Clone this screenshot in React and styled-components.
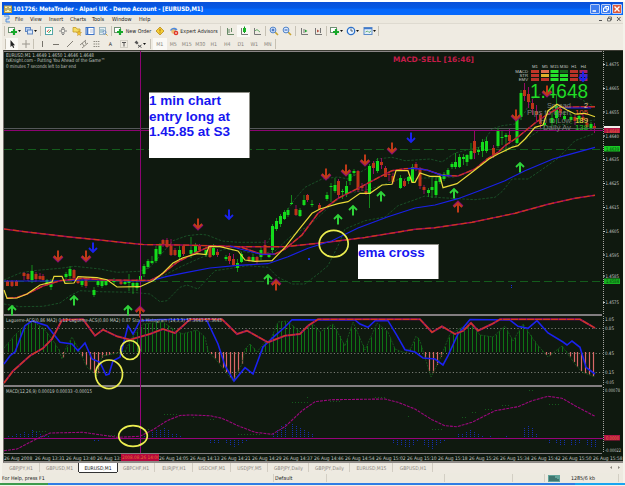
import styled, { createGlobalStyle } from "styled-components";

const GlobalStyle = createGlobalStyle`
  * { box-sizing: border-box; }
  body {
    margin: 0;
    background: #fff;
    overflow: hidden;
    font-family: "DejaVu Sans Condensed", "DejaVu Sans", sans-serif;
  }
`;

const Window = styled.div`
  width: 625px;
  height: 486px;
  padding: 2px 2px 0 2px;
  display: flex;
  flex-direction: column;
  background: #f4f2ea;
  box-shadow: inset 0 2px #fff;
`;

const TitleBar = styled.header`
  height: 13px;
  flex: none;
  display: flex;
  align-items: center;
  padding: 0 1px 0 2px;
  background: linear-gradient(#0a50d8 0%, #0458e6 45%, #0668fc 60%, #0668fc 100%);
  color: #fff;
`;

const TitleText = styled.span`
  flex: 1;
  margin-left: 1px;
  font: bold 6.1px "DejaVu Sans Condensed", "DejaVu Sans", sans-serif;
  letter-spacing: -0.1px;
  white-space: nowrap;
`;

const WindowButton = styled.span`
  width: 10px;
  height: 10px;
  margin-left: 1px;
  border: 1px solid #b9cdf6;
  border-radius: 1px;
  background: ${({ $close }) => ($close ? "#dc5a3c" : "#3f7df0")};
  display: flex;
`;

const MenuBar = styled.nav`
  height: 9px;
  flex: none;
  display: flex;
  align-items: center;
  background: #ece8de;
  border-bottom: 1px solid #dedad0;
  font-size: 5.5px;
  color: #222;
`;

const MenuItem = styled.span`
  width: ${({ $width }) => $width}px;
  white-space: nowrap;
`;

const ChildButtons = styled.span`
  margin-left: auto;
  display: flex;
  gap: 4px;
  padding-right: 2px;
  color: #555;
`;

const ToolBar = styled.div`
  height: ${({ $height }) => $height}px;
  flex: none;
  display: flex;
  align-items: center;
  padding-left: ${({ $indent }) => $indent}px;
  background: #efebe2;
  font-size: 5.3px;
  color: #222;
`;

const Tool = styled.span`
  width: ${({ $width }) => $width || 14}px;
  height: 12px;
  flex: none;
  display: flex;
  align-items: center;
  justify-content: center;
  color: ${({ $muted }) => ($muted ? "#858178" : "#222")};
  background: ${({ $pressed }) => ($pressed ? "#faf9f5" : "transparent")};
  white-space: nowrap;

  svg { flex: none; }
`;

const Separator = styled.i`
  width: 1px;
  height: 10px;
  margin: 0 ${({ $gap }) => $gap ?? 2}px;
  flex: none;
  background: #c6c1b4;
`;

const ChartFrame = styled.main`
  position: relative;
  width: 620px;
  height: 413px;
  flex: none;
  margin-left: 1px;
  display: flex;
  flex-direction: column;
  background: #0f190f;
  border-top: 1px solid #3c3c34;
  border-bottom: 2px solid #8f8b88;
  border-left: 1px solid #77706c;
`;

const Pane = styled.svg`
  display: block;
  flex: none;
  width: 618px;
  height: ${({ $height }) => $height}px;
  overflow: visible;
  position: relative;
  z-index: ${({ $raised }) => ($raised ? 1 : 0)};
`;

const Divider = styled.div`
  width: 598px;
  height: ${({ $height }) => $height || 2}px;
  flex: none;
  background: #827e80;
`;

const TimeAxis = styled.div`
  flex: 1;
  display: flex;
  align-items: center;
  font-size: 4.9px;
  color: #c9cdc9;
  white-space: nowrap;
`;

const TimeLabel = styled.span`
  width: ${({ $width }) => $width || 31}px;
  flex: none;
`;

const CursorTime = styled.span`
  width: 38px;
  height: 7px;
  flex: none;
  padding-left: 1px;
  overflow: hidden;
  background: #b4083c;
  color: #ea6c30;
  font-size: 4.7px;
  line-height: 7px;
`;

const Note = styled.div`
  position: absolute;
  z-index: 2;
  left: ${({ $x }) => $x}px;
  top: ${({ $y }) => $y}px;
  width: ${({ $width }) => $width}px;
  height: ${({ $height }) => $height}px;
  background: #fff;
  border: 1px solid #8d8d86;
  border-width: 1px 1px 0 0;
  color: #1616f0;
  font: bold 13.5px/15.5px "Liberation Sans", Arial, sans-serif;
  white-space: pre-line;
`;

const Tabs = styled.div`
  height: 10px;
  flex: none;
  display: flex;
  background: #eeeae1;
  font-size: 5px;
  color: #8b877e;
`;

const Tab = styled.span`
  width: ${({ $width }) => $width}px;
  flex: none;
  display: flex;
  justify-content: center;
  align-items: center;
  white-space: nowrap;
  height: 9px;
  color: ${({ $active }) => ($active ? "#111" : "inherit")};
  background: ${({ $active }) => ($active ? "#fff" : "transparent")};
  box-shadow: ${({ $active }) =>
    $active ? "-1px 0 #333, 1px 0 #333, 0 1px #333" : "inset -1px 0 #d2cdc2"};
`;

const TabArrows = styled.svg`
  width: 14px;
  height: 9px;
  margin-left: auto;
`;

const StatusBar = styled.footer`
  height: 10px;
  flex: none;
  display: flex;
  align-items: center;
  background: #edeae0;
  font-size: 5.3px;
  color: #222;
`;

const StatusCell = styled.span`
  width: ${({ $width }) => $width}px;
  height: 8px;
  flex: none;
  display: flex;
  align-items: center;
  gap: 11px;
  white-space: nowrap;
  padding-left: ${({ $pad }) => $pad || 0}px;
  border-right: 1px solid #d3cfc4;
`;

const TaskBar = styled.div`
  height: 2px;
  flex: none;
  margin: 0 -2px;
  background: linear-gradient(90deg, #3d9a4c 0 48px, #2f7de4 48px 575px, #19a5f0 575px);
`;

// Candles: x, high, low, body top, body bottom, 1 = up / 0 = down
const candles = [
  [7.5,281,287,282,287,0],[12,281,288,282,287,0],[16.5,281,287,282,287,0],
  [24,273,281,274,277,0],[28,274,282,275,280,0],[32,266,284,272,281,1],[36,273,283,275,280,0],
  [40,274,281,277,280,0],[43,275,282,277,281,0],[47,280,287,281,286,1],[51,280,291,282,288,1],
  [66,273,280,275,278,1],[70,267,280,270,277,1],[74,270,281,271,279,0],[78,279,285,281,284,0],
  [82,280,288,282,286,1],[86,278,289,279,287,0],[94,288,298,291,296,1],[98,280,288,282,286,1],
  [102,281,289,282,287,1],[106,281,287,282,286,1],[114,279,286,281,283,1],[121,281,286,282,285,0],
  [125,281,286,283,285,1],[129,275,292,282,284,1],[133,282,295,284,287,1],[137,280,292,284,289,1],
  [140.5,274,283,277,281,1],[144,265,278,267,275,1],[148,260,270,262,268,1],[152,257,265,262,264,1],
  [156,247,264,250,262,1],[160,244,256,246,255,1],[163,240,248,241,246,0],[167,239,249,241,248,0],
  [171,240,257,246,256,0],[175,249,257,251,256,0],[179.5,247,261,251,258,1],[183.5,246,257,247,255,0],
  [191,238,259,251,255,1],[195.5,244,256,246,254,1],[199.5,245,253,247,251,0],[206,248,258,251,256,1],
  [210,247,259,247,258,0],[213.5,245,257,249,256,1],[217.5,250,258,253,256,0],[226,256,262,258,260,1],
  [229.5,254,265,257,262,0],[233.5,255,267,260,266,0],[237.5,260,273,264,269,1],[241.5,253,264,255,263,1],
  [249,257,263,258,261,0],[253,255,263,258,262,1],[257,257,265,258,262,0],[261,248,261,251,258,1],
  [265,241,256,246,255,0],[269,255,259,256,258,1],[272.5,225,254,227,251,1],[276.5,219,232,222,230,1],
  [280.5,215,228,217,225,1],[284.5,211,221,213,220,1],[288,209,218,211,216,1],[291.5,196,206,204,205,1],
  [296,206,217,210,216,0],[300,209,218,211,217,1],[304,196,207,201,206,1],[307.5,195,203,196,201,0],
  [312,201,208,205,206,1],[319.5,204,211,206,210,0],[327,193,202,196,200,1],[331,184,203,187,188,1],
  [335,179,194,186,192,1],[338.5,180,200,182,196,0],[342.5,190,200,192,193,1],[346.5,182,198,187,195,1],
  [350,172,186,175,182,1],[354,170,177,172,174,1],[358,171,193,172,191,0],[362,184,192,187,189,0],
  [366,186,196,192,195,0],[369.5,165,209,167,195,1],[373.5,162,175,164,169,0],[377.5,159,174,162,172,1],
  [381.5,159,170,163,166,0],[385.5,167,178,169,178,0],[389,173,182,175,176,0],[393,174,185,177,183,0],
  [400.5,176,190,179,189,1],[404.5,180,188,182,187,0],[408.5,177,185,178,182,1],[412.5,165,184,168,183,1],
  [416,163,172,165,169,0],[420,168,190,170,187,0],[424,186,195,188,191,0],[428.5,189,198,191,194,1],
  [432,177,199,188,191,1],[436,178,198,182,196,1],[440,174,185,178,183,1],[444,173,182,175,180,1],
  [448,169,178,171,176,1],[452,163,170,165,168,1],[455.5,154,170,163,168,1],[459.5,155,169,158,168,1],
  [463.5,155,166,158,160,1],[467,155,167,156,163,1],[471,144,161,152,160,1],[474.5,132,160,142,154,0],
  [478.5,148,156,151,153,1],[482.5,140,158,143,152,1],[486.5,138,154,142,152,1],[493.5,146,159,149,156,0],
  [498,129,149,132,147,1],[502,131,146,138,139,1],[506,134,153,136,138,1],[509.5,130,145,136,142,0],
  [517,118,145,120,144,1],[521,91,121,94,118,1],[524.5,84,102,91,97,0],[528.5,88,109,95,103,0],
  [532.5,100,116,104,110,0],[536.5,106,122,112,116,0],[540.5,114,129,116,125,0],[544.5,121,128,124,126,1],
  [552,113,127,119,124,1],[556.5,95,125,107,119,1],[560.5,106,118,110,114,0],[564.5,112,122,117,120,1],
  [571,115,123,118,121,1],[575,116,126,118,122,0],[579,115,124,117,120,1],[583,115,123,118,121,0],
  [587,119,129,124,128,0],[591,123,131,125,129,1],[594.5,124,134,127,129,0],
];

const slowMa = "4,230 27,233 70,238 100,241 127,244 143,245.5 180,246 210,246.7 238,247.7 285,247.7 325,243.5 365,238.5 415,230.3 435,228.7 472,223.3 515,214.3 548,205.3 575,199.3 595,196.3";
const blueMa = "4,282 53,282 93,280.7 127,282 150,282 167,277.3 187,273.3 210,269 238,266.3 268,264.7 288,257.7 308,249.3 332,241.7 358,229 388,217.7 415,209 435,206 458,199.7 482,190.7 505,181.7 525,171.7 553,160 565,156.7 595,148.3";
const yellowMa = "4,291 7,299.3 17,299 27,295 40,286 52,283 54,277.3 62,277.3 65,284.3 74,284 78,277.7 97,278.7 107,280.7 117,288 140,287.7 153,281.7 163,274 173,264 183,258.7 197,254.7 206,255.7 209,247.3 220,247.7 238,252 245,261 255,262.3 272,261.7 285,248.3 298,231.7 312,214.3 320,210 338,204.7 348,202.7 360,194.3 370,194.3 382,186 392,185.3 396,171.7 408,171.7 412,183.3 415,183.3 420,174 430,177.3 440,177.3 443,188.7 457,184.7 472,173.3 489,160 498,155 512,148.3 518,146.7 525,140 535,128.3 543,126 548,111.7 557,105.3 567,111 575,115 585,114.3 595,117.7";
const redMa = "7,299 17,298.5 27,295 43,287 60,281.7 83,279.3 105,281 150,281.5 160,276.7 177,263.3 193,255 210,247.3 240,247.7 262,255.5 275,255 285,250 302,236 318,214.3 338,199.3 362,187.3 382,176.7 392,171.7 405,169.7 415,169.3 427,171 442,176.3 458,177 475,170 487,160 498,153.3 505,146.7 518,138 535,124 548,115 560,108.3 595,107.7";
const bands = [
  "4,281 20,274 33,271.7 60,269.3 75,267.3 100,270 117,273.3 140,272.3 150,268.3 160,256.7 173,241.7 187,236.7 200,235.3 207,236 222,242 238,243.3 268,243.3 275,228 295,200 305,188.3 322,180 338,178 348,180 372,166.7 377,160 392,158.3 405,161.7 430,160 442,163 455,154 480,148 492,130 502,126.7 515,125 525,113 532,100 548,91 558,96 575,97 595,108",
  "4,305 20,307.7 43,307.3 60,304 70,296.7 80,291.7 100,292.7 133,293.3 150,295 160,302.7 167,301.7 180,288.3 187,286 198,290 210,277 215,271.7 248,266.7 268,268.3 278,278.3 292,285 305,285 318,275 328,266.7 338,246.7 345,230 365,221.7 385,218 398,206.7 415,200.7 425,197 435,198.3 475,200.7 495,198.3 503,191.7 512,180 528,180 538,173.3 557,160 575,141.7 593,135",
  "150,282 165,276 180,268 200,259 225,250 260,255 275,252 290,238 310,226 330,207 345,195 370,190 400,180 425,179 455,178 475,171 500,152 520,144 545,128 575,124 595,121",
];

const redLaguerre = "4,384 13,372 30,356.7 43,349.3 52,340 62,321 83,320.3 95,336.7 103,330.7 117,337.3 130,340.7 150,335 163,330 175,334 183,326.7 190,320.3 222,320.3 237,335 247,331.7 268,343.3 285,336.7 300,335 308,326.7 318,320.3 420,320.3 432,333.3 442,327.3 455,335 463,332 471,324 478,331.7 492,325 500,320.3 580,320.3 595,329";
const blueLaguerre = "4,365 10,356.7 15,353 25,326.7 32,322 47,326.7 60,343.3 72,345 78,351.7 85,344 92,360 100,363.3 106,376 109,375 113,361.7 120,358.3 128,326.7 133,335 140,321.7 160,320.5 205,320.5 207,321.7 218,345 225,366.7 234,382 245,368.7 253,375 263,348 275,336.7 285,328 292,320.7 355,321 360,325 368,328.3 375,321.7 388,321.7 397,336.7 405,350.7 415,353 423,359 435,360 443,366 448,356.7 458,335 470,320.5 510,321 518,327.3 528,329.3 537,321.7 548,334 563,343 567,346 572,342 580,348.3 586,368.3 595,375";
const stoch = [[4,349],[15,336],[25,326],[32,322],[43,329],[52,340],[59,351],[62,360],[66,349],[72,338],[77,347],[80,353],[87,368],[97,377],[102,357],[113,355],[125,352],[133,337],[143,325],[163,323],[173,330],[182,335],[197,331],[205,338],[208,352],[218,363],[233,382],[242,365],[245,350],[250,345],[257,353],[265,343],[270,342],[278,323],[287,322],[300,333],[313,325],[320,333],[333,325],[345,347],[353,323],[365,351],[377,324],[388,333],[395,350],[405,354],[411,349],[416,337],[420,342],[431,378],[440,360],[450,335],[470,324],[480,336],[493,338],[505,327],[513,342],[523,325],[535,343],[548,358],[562,347],[575,365],[582,373],[595,378]];
const macdSignal = "4,451.7 17,450 33,441.7 50,434 83,433.3 117,438.3 140,437.3 153,430.7 167,421.7 180,416.5 190,416 210,416.7 222,419.3 238,426.7 255,433.3 272,435.3 285,427.7 302,411.7 315,402.7 332,400.7 385,400 398,403.3 415,410 432,420.7 445,426.7 457,427.7 472,423.3 495,411.7 518,407.7 532,401.7 548,397.3 562,399.3 575,406.7 595,417.3";

// MACD histogram columns: x and end y, measured from the zero line
const macdBars = [
  [8,436],[12,436],[16,435],[20,434],[24,432],[28,434],[32,430],[36,433],[40,434],[44,436],[48,437],
  [86,441],[94,443],[98,442],[102,441],[144,436],[152,433],[156,431],[160,430],[164,428],[168,431],[172,434],[176,435],[180,437],
  [210,444],[214,444],[218,445],[226,445],[230,446],[234,448],[238,447],[242,444],[246,442],[250,441],
  [273,435],[277,430],[281,427],[285,425],[292,425],[296,427],[300,429],[304,430],[308,432],[312,434],[316,438],
  [366,441],[393,444],[397,446],[401,447],[405,449],[409,448],[413,446],[417,443],[424,446],[428,448],[432,450],[436,447],[440,445],[444,443],
  [458,435],[462,434],[466,433],[470,431],[474,432],[478,434],[482,436],[490,437],[498,438],[506,437],
  [524,428],[528,427],[532,429],[536,434],[545,441],[549,444],[556,445],[560,447],[564,447],[571,446],[575,446],[579,445],[587,446],[591,448],[595,448],
];

const arrows = [
  [58,257,"r",1],[86,257,"r",1],[93,249,"b",1],[198,225,"r",1],[229,216,"b",1],[326,175,"r",1],
  [346,171,"r",1],[365,161,"r",1],[392,149,"r",1],[411,139,"b",1],[516,116,"r",1],[547,92,"r",1],[583,78,"b",1],
  [12,311,"g",0],[74,301,"g",0],[128,311,"g",0],[140,313,"r",0],[268,280,"g",0],[276,286,"r",0],
  [338,220,"g",0],[353,211,"g",0],[381,197,"g",0],[454,194,"g",0],[458,208,"r",0],[520,168,"g",0],
];

const arrowColors = { r: "#c03a18", g: "#2fd33a", b: "#1a22ee" };

const prices = [
  [65.5,"1.4675"],[89.5,"1.4665"],[113,"1.4655"],[137,"1.4640"],[160.5,"1.4635"],[184.5,"1.4625"],
  [208.5,"1.4615"],[232.5,"1.4605"],[256,"1.4595"],[277,"1.4585"],[303.5,"1.4575"],
];

const times = ["14:05","14:13","14:21","14:29","14:37","14:46","14:54","15:02","15:10","15:18","15:26","15:34","15:42","15:50","15:58"];

const tabs = [
  ["GBPJPY,H1",38],["GBPUSD,M1",39],["EURUSD,M1",38,true],["GBPCHF,H1",38],["EURJPY,H1",38],["USDCHF,M1",38],
  ["USDJPY,M5",37],["GBPJPY,Daily",41],["GBPJPY,Daily",41],["EURUSD,M15",43],["GBPUSD,H1",40],
];

function stochAt(x) {
  const i = stoch.findIndex(([px]) => px >= x);
  if (i < 1) return stoch[0][1];
  const [x0, y0] = stoch[i - 1];
  const [x1, y1] = stoch[i];
  return y0 + ((y1 - y0) * (x - x0)) / (x1 - x0);
}

function Label({ x, y, w, size = 5, fill = "#c3c8c3", anchor, bold, children }) {
  return (
    <text
      x={x}
      y={y}
      fill={fill}
      fontSize={size}
      fontWeight={bold ? "bold" : "normal"}
      textAnchor={anchor}
      textLength={w}
      lengthAdjust="spacingAndGlyphs"
    >
      {children}
    </text>
  );
}

function Arrow({ x, y, color, down }) {
  return (
    <g transform={`translate(${x} ${y}) scale(1 ${down ? 1 : -1})`} fill="none" stroke={arrowColors[color]}>
      {color === "r" && <path d="M-4.5 0.5L0 5L4.5 0.5" stroke="#8a0e72" strokeWidth="2.6" />}
      <path d="M0 -5.5V4" strokeWidth="2" />
      <path d="M-4 0L0 4L4 0" strokeWidth="1.8" />
    </g>
  );
}

function Axis({ top, bottom }) {
  return <path d={`M603.5 ${top}V${bottom}`} stroke="#a5a5a0" strokeDasharray="1 1" />;
}

const signalColors = [
  ["#c23528","#df6c4c","#25e02c","#15641c","#b83228","#a82063"],
  ["#bd322a","#e2b02a","#25e02c","#25e02c","#b83228","#4a28c0"],
  ["#b7322a","#bd322a","#25e02c","#25e02c","#b83228","#a82063"],
];
const signalX = [531, 541, 550.5, 560, 570, 579.5];

const stats = [
  ["Spread",24,"2",4,"#e8c89a"],
  ["Pips to open",44,"105",13,"#e0442a"],
  ["Hi to Low",31,"189",13,"#f0e040"],
  ["Daily Av",28,"138",13,"#20c826"],
];

function Dashboard() {
  return (
    <g fontFamily="Liberation Sans, Arial, sans-serif">
      {["M1","M5","M15","M30","H1","H4"].map((name, i) => (
        <Label key={name} x={signalX[i] + 4} y={69} size={4.3} anchor="middle">{name}</Label>
      ))}
      {["MACD","STR","EMV"].map((name, row) => (
        <g key={name}>
          <Label x={528} y={74 + row * 4} size={4.3} anchor="end">{name}</Label>
          {signalX.map((x, i) => (
            <rect key={x} x={x} y={71 + row * 4} width="8" height="3" fill={signalColors[row][i]} />
          ))}
        </g>
      ))}
      <Label x={530} y={98.5} w={58} size={21} fill="#20dc26">1.4648</Label>
      {stats.map(([name, w, value, vw, color], i) => (
        <g key={name}>
          <Label x={571 - w} y={109 + i * 7.4} w={w} size={7.8} fill="#77807a">{name}</Label>
          <Label x={588 - vw} y={109 + i * 7.4} w={vw} size={7.8} fill={color}>{value}</Label>
        </g>
      ))}
    </g>
  );
}

function PricePane() {
  return (
    <Pane $height={263} viewBox="4 52 618 263" $raised>
      <path d="M4 52.5H602" stroke="#8a8686" />
      <path d="M4 129.5H603" stroke="#55585a" />
      <path d="M4 150.5H603M4 282.5H603" stroke="#145c1c" strokeDasharray="8 4" />
      <g fill="none" stroke="#1c5c2c" strokeWidth="0.8" strokeDasharray="2.5 1.5">
        {bands.map((points) => <polyline key={points} points={points} />)}
      </g>
      {candles.map(([x, high, low, top, bottom, up]) => (
        <g key={x}>
          <path d={`M${x} ${high}V${low}`} stroke={up ? "#168a1c" : "#960a64"} strokeWidth="1" />
          <rect x={x - 1.5} y={top} width="3" height={bottom - top} fill={up ? "#14dc1c" : "#bc3418"} />
        </g>
      ))}
      <path d="M4 131.5H603M140.5 52V315" stroke="#8c0472" />
      <g fill="none" strokeWidth="1.2">
        <polyline points={slowMa} stroke="#a00860" strokeWidth="1.4" />
        <polyline points={slowMa} stroke="#cc3c14" strokeDasharray="6 3" />
        <polyline points={blueMa} stroke="#1a20e8" />
        <polyline points={redMa} stroke="#98085c" strokeWidth="1.5" />
        <polyline points={redMa} stroke="#cc3c1c" strokeDasharray="6 2" />
        <path d="M230 247L240 250L262 255.5L275 255M408 169.5L415 169.3L427 171L442 176.3L452 177M562 109H591" stroke="#1a20e8" />
      </g>
      <Dashboard />
      <polyline points={yellowMa} fill="none" stroke="#e8d838" strokeWidth="1.2" />
      {arrows.map(([x, y, color, down]) => (
        <Arrow key={`${x}-${y}`} x={x} y={y} color={color} down={down} />
      ))}
      <path d="M308 259h2v2h-2zM511 286h1v1h-1zM511 288h1v1h-1z" fill="#1a30e0" />
      <Label x={6} y={58.3} w={88}>EURUSD,M1  1.4649 1.4650 1.4646 1.4648</Label>
      <Label x={6} y={63.3} w={99}>fxKnight.com - Putting You Ahead of the Game™</Label>
      <Label x={6} y={69} w={70}>0 minutes 7 seconds left to bar end</Label>
      <Label x={393} y={62.5} w={81} size={7.4} bold fill="#c41c48">MACD-SELL [16:46]</Label>
      <Axis top={52} bottom={315} />
      {prices.map(([y, price]) => (
        <g key={price}>
          <path d={`M603 ${y}h2`} stroke="#c3c8c3" />
          <Label x={605.5} y={y + 1.8} w={13.5} size={4.8}>{price}</Label>
        </g>
      ))}
      <rect x="604" y="127" width="16" height="2" fill="#f0f0ea" />
      <rect x="604" y="129" width="16" height="5" fill="#b01444" />
      <Label x={606} y={133.5} w={13} fill="#e87038">1.4648</Label>
      <rect x="604" y="147" width="16" height="5.5" fill="#18c824" />
      <Label x={606} y={151.6} w={13} fill="#083e0c">1.4639</Label>
      <rect x="604" y="279.5" width="16" height="5.5" fill="#16b020" />
      <Label x={606} y={284} w={13} fill="#083e0c">1.4584</Label>
      <ellipse cx="333.7" cy="244.7" rx="14.5" ry="13.3" fill="none" stroke="#ecee50" strokeWidth="1.7" />
    </Pane>
  );
}

const stochBars = Array.from({ length: 151 }, (_, i) => 8 + i * 3.9).filter((x) => x < 596);

function LaguerrePane() {
  return (
    <Pane $height={69} viewBox="4 317 618 69" $raised>
      <path d="M4 329.5H603M4 354.5H603M4 373.5H603" stroke="#83867f" strokeDasharray="1.2 2.2" strokeWidth="0.9" />
      {stochBars.map((x) => {
        const y = stochAt(x);
        return (
          <path
            key={x}
            d={`M${Math.round(x) + 0.5} 353V${y}`}
            stroke={y > 353 ? "#d96868" : "#0e7414"}
            strokeWidth={y > 353 ? 1.2 : 1}
          />
        );
      })}
      <polyline points={stoch.map((p) => p.join()).join(" ")} fill="none" stroke="#16521c" strokeDasharray="2 1" />
      <g fill="none" strokeWidth="1.6">
        <polyline points={blueLaguerre} stroke="#1b22ee" />
        <polyline points={redLaguerre} stroke="#8c0a70" strokeWidth="2" />
        <polyline points={redLaguerre} stroke="#d23c1c" strokeWidth="1.3" strokeDasharray="7 1" />
      </g>
      <Label x={6} y={323.3} w={216}>Laguerre-ACS(0.86 MA2) 0.12  Laguerre-ACS(0.80 MA2) 0.87  Stoch Histogram (14,3,3) 57.3643 57.3643</Label>
      <path d="M140.5 315V388" stroke="#8c0472" />
      <Axis top={317} bottom={386} />
      {[[322,"1.05"],[331,"0.85"],[356,"0.45"],[375,"0.15"],[384.5,"-0.05"]].map(([y, t]) => (
        <Label key={t} x={605} y={y} w={9} size={4.8}>{t}</Label>
      ))}
      <g fill="none" stroke="#ecee50" strokeWidth="1.7">
        <ellipse cx="130" cy="351" rx="9.5" ry="9.5" />
        <ellipse cx="109" cy="375.3" rx="13.5" ry="14.3" />
      </g>
    </Pane>
  );
}

function MacdPane() {
  return (
    <Pane $height={66} viewBox="4 388 618 66">
      {macdBars.map(([x, y]) => (
        <path key={x} d={`M${x + 0.5} ${y < 439 ? 438 : 441}V${y}`} stroke="#142fae" strokeDasharray="1 1" />
      ))}
      <path
        d="M33 432.5h14M108 436.5h8M145 430.5h6M164 415.5h14M193 418.5h3M210 420.5h5M238 435.5h24M292 403.5h16M307 398.5h2M330 402.5h10M375 398.5h10M408 417.5h2M432 430.5h12M462 418.5h4M472 413.5h6M485 410.5h8M502 406.5h8M529 391.5h4M549 405.5h10"
        stroke="#155a1c"
        strokeDasharray="1 2"
      />
      <polyline points={macdSignal} fill="none" stroke="#9a087c" strokeWidth="1.1" strokeDasharray="3 1" />
      <path d="M4 439.5H603M140.5 388V454" stroke="#96047a" />
      <Label x={6} y={394} w={86}>MACD(12,26,9) 0.00019 0.00033 -0.00015</Label>
      <Axis top={388} bottom={454} />
      <Label x={605} y={392.5} w={15} size={4.8}>0.00078</Label>
      <Label x={605} y={453} w={16} size={4.8}>-0.00022</Label>
      <rect x="604" y="436" width="16" height="5.5" fill="#b01444" />
      <Label x={606} y={440.6} w={13} fill="#ee7a38">0.0000</Label>
      <ellipse cx="133" cy="437" rx="14.3" ry="10.3" fill="none" stroke="#ecee50" strokeWidth="1.7" />
    </Pane>
  );
}

const Icon = ({ children }) => (
  <svg width="10" height="10" viewBox="0 0 10 10" fill="none">{children}</svg>
);

const Drop = () => (
  <svg width="3" height="2" viewBox="0 0 3 2"><path d="M0 0H3L1.5 2Z" fill="#111" /></svg>
);

const PlusIcon = () => (
  <Icon>
    <rect x="0.5" y="1.5" width="6" height="5" fill="#fff" stroke="#6f8f74" />
    <path d="M6 3V9M3 6H9" stroke="#17a82a" strokeWidth="2.2" />
  </Icon>
);

const ZoomIcon = ({ plus }) => (
  <Icon>
    <path d="M5.5 5.5L9 9" stroke="#c9a330" strokeWidth="1.6" />
    <circle cx="4" cy="4" r="2.9" fill="#dcebff" stroke="#4f82c8" />
    <path d={plus ? "M2.5 4H5.5M4 2.5V5.5" : "M2.5 4H5.5"} stroke="#2456b0" />
  </Icon>
);

function MainTools() {
  return (
    <ToolBar $height={14} $indent={1}>
      <Separator $gap={1} />
      <Tool $width={16}><PlusIcon /><Drop /></Tool>
      <Tool $width={17}>
        <Icon>
          <rect x="1.5" y="1.5" width="5" height="4" fill="#b8d0f4" stroke="#5f86c0" />
          <rect x="3.5" y="4" width="5" height="4" fill="#dbe8fa" stroke="#5f86c0" />
        </Icon>
        <Drop />
      </Tool>
      <Separator $gap={1} />
      <Tool>
        <Icon>
          <rect x="1.5" y="1.5" width="7" height="7" fill="#fff" stroke="#55a5a8" />
          <path d="M3 6L5 3.5" stroke="#d34b36" /><path d="M4.5 7L7 4" stroke="#24a43a" />
        </Icon>
      </Tool>
      <Tool>
        <Icon><path d="M5 1V9M1 5H9M3.5 2.5L5 1L6.5 2.5M3.5 7.5L5 9L6.5 7.5" stroke="#858585" /><rect x="3.5" y="3.5" width="3" height="3" fill="#f4f2ea" stroke="#858585" strokeWidth="0.7" /></Icon>
      </Tool>
      <Tool $width={13}>
        <Icon><path d="M1 1.5H4L5 3H8V6H1Z" fill="#f5dc63" stroke="#c59c25" strokeWidth="0.8" /><path d="M7 4.5L7.8 6.5H9.5L8 7.8L8.5 9.5L7 8.5L5.5 9.5L6 7.8L4.5 6.5H6.2Z" fill="#f7c72b" stroke="#c08a1c" strokeWidth="0.5" /></Icon>
      </Tool>
      <Tool $width={13}>
        <Icon><rect x="1" y="1.5" width="8" height="7" fill="#fff" stroke="#3e74c8" /><path d="M2.5 2V8" stroke="#3e74c8" strokeWidth="1.6" /><path d="M5 4H8M5 6H8" stroke="#9cabc5" strokeWidth="0.7" /></Icon>
      </Tool>
      <Tool>
        <Icon><rect x="1.5" y="1.5" width="6" height="7" fill="#e6eef4" stroke="#8aa9b5" strokeWidth="0.8" /><path d="M3 3V7M5 3V6" stroke="#72a5b0" /><circle cx="6.5" cy="6.3" r="1.6" stroke="#5f86c0" strokeWidth="0.8" /><path d="M8 8L9.5 9.5" stroke="#c9a330" /></Icon>
      </Tool>
      <Separator $gap={1} />
      <Tool $width={11}><PlusIcon /></Tool>
      <Tool $width={29}>New Order</Tool>
      <Tool $width={14}>
        <Icon><path d="M5 1L9 5L5 9L1 5Z" fill="#f5cf35" stroke="#b98a1a" strokeWidth="0.8" /><path d="M5 2.8V5.5M5 6.3V7.3" stroke="#a86c10" /></Icon>
      </Tool>
      <Tool $width={13}>
        <Icon><path d="M1 4.5C2 1 7 1 8.5 3.5L6 5Z" fill="#4a88dd" /><circle cx="4.5" cy="5.5" r="2.2" fill="#e9bd75" /><circle cx="7" cy="7" r="2.3" fill="#df3728" /><path d="M6 7H8" stroke="#fff" /></Icon>
      </Tool>
      <Tool $width={38}>Expert Advisors</Tool>
      <Separator $gap={2} />
      <Tool><Icon><path d="M2.5 2V8.5H9M4 3V7M6.5 2V6" stroke="#668a66" /></Icon></Tool>
      <Tool $width={13} $pressed><Icon><path d="M2.5 2V8.5H9" stroke="#777" /><path d="M5.5 0.5V7" stroke="#168c22" /><rect x="4" y="2" width="3" height="4" fill="#19b428" /></Icon></Tool>
      <Tool><Icon><path d="M2.5 2V8.5H9" stroke="#777" /><path d="M3 5C5 2.5 6 4.5 8 6" stroke="#4ba352" /></Icon></Tool>
      <Separator $gap={1} />
      <Tool $width={13}><ZoomIcon plus /></Tool>
      <Tool><ZoomIcon /></Tool>
      <Separator $gap={1} />
      <Tool><Icon><path d="M2.5 2V8.5H9M5 3V7" stroke="#777" /><path d="M6 3.5L8.5 5L6 6.5Z" fill="#25a434" /></Icon></Tool>
      <Tool><Icon><path d="M2.5 2V8.5H9M7.5 2V7" stroke="#777" /><path d="M4 3.5L6.5 5L4 6.5Z" fill="#b65040" /></Icon></Tool>
      <Separator $gap={1} />
      <Tool $width={16}><PlusIcon /><Drop /></Tool>
      <Tool $width={17}>
        <Icon><circle cx="5" cy="5" r="3.7" fill="#e8f3ff" stroke="#2c70c8" strokeWidth="1.3" /><path d="M5 2.5V5H7" stroke="#345" strokeWidth="0.8" /></Icon>
        <Drop />
      </Tool>
      <Tool $width={17}>
        <Icon><rect x="1" y="1.5" width="8" height="7" fill="#e4eefa" stroke="#5a8ac8" /><path d="M1 2.5H9" stroke="#4079cc" strokeWidth="1.5" /><path d="M2.5 6L4.5 5L6 6.5L8 5" stroke="#4ba352" strokeWidth="0.8" /></Icon>
        <Drop />
      </Tool>
      <Separator $gap={0} />
    </ToolBar>
  );
}

function LineTools() {
  return (
    <ToolBar $height={12} $indent={3}>
      <Separator $gap={0} />
      <Tool $width={12} $pressed><Icon><path d="M3.5 1V8L5 6.5L6.2 9L7.2 8.5L6.2 6.2H8Z" fill="#222" /></Icon></Tool>
      <Tool $width={15}><Icon><path d="M5 1V9M1 5H9" stroke="#9a968d" /></Icon></Tool>
      <Separator $gap={0} />
      <Tool $width={15}><Icon><path d="M5.5 2V8" stroke="#77736b" /></Icon></Tool>
      <Tool><Icon><path d="M2 5.5H8" stroke="#77736b" /></Icon></Tool>
      <Tool><Icon><path d="M2 8L8 2" stroke="#77736b" strokeWidth="0.9" /></Icon></Tool>
      <Tool $width={13}><Icon><path d="M1 6L7 1M3 9L9 4M3 4L5 7M6 2L7 5" stroke="#77736b" strokeWidth="0.8" /></Icon></Tool>
      <Tool><Icon><path d="M1.5 2.5H8M1.5 5H8M1.5 7.5H8" stroke="#77736b" strokeDasharray="1.5 0.7" strokeWidth="0.8" /></Icon></Tool>
      <Tool $width={13}>A</Tool>
      <Tool><Icon><rect x="1.5" y="1.5" width="7" height="7" stroke="#aaa69c" strokeDasharray="1 1" strokeWidth="0.8" /><path d="M3 3.5H7M5 3.5V7.5" stroke="#555" /></Icon></Tool>
      <Tool $width={17}><Icon><path d="M1.5 3.5L3.5 1.5L5.5 4L4 5.5Z" fill="#555" /><path d="M5 6L8.5 8.5M8.5 6L5 8.5" stroke="#555" /></Icon><Drop /></Tool>
      <Separator $gap={2} />
      {["M1","M5","M15","M30","H1","H4","D1","W1","MN"].map((name) => (
        <Tool key={name} $width={13.5} $muted $pressed={name === "M1"}>{name}</Tool>
      ))}
      <Separator $gap={0} />
    </ToolBar>
  );
}

export default function App() {
  return (
    <>
      <GlobalStyle />
      <Window>
        <TitleBar>
          <svg width="8" height="8" viewBox="0 0 8 8">
            <rect x="0.5" y="1" width="7" height="6.5" fill="#f6efb4" stroke="#b89c43" />
            <path d="M2 6V3M4 5V2M6 6V3" stroke="#7b6c28" />
          </svg>
          <TitleText>101726: MetaTrader - Alpari UK - Demo Account - [EURUSD,M1]</TitleText>
          <WindowButton><svg width="8" height="8" viewBox="0 0 8 8"><path d="M1.5 6H5" stroke="#fff" strokeWidth="1.5" /></svg></WindowButton>
          <WindowButton><svg width="8" height="8" viewBox="0 0 8 8" fill="none"><path d="M3 3V1.5H6.5V5H5M1.5 3H5V6.5H1.5Z" stroke="#fff" /></svg></WindowButton>
          <WindowButton $close><svg width="8" height="8" viewBox="0 0 8 8"><path d="M1.5 1.5L6.5 6.5M6.5 1.5L1.5 6.5" stroke="#fff" strokeWidth="1.4" /></svg></WindowButton>
        </TitleBar>
        <MenuBar>
          <MenuItem $width={13}>
            <svg width="9" height="8" viewBox="0 0 9 8"><path d="M2 1H7V4H4V7H8" fill="#c4dbf5" stroke="#5d91d0" /></svg>
          </MenuItem>
          <MenuItem $width={15}>File</MenuItem>
          <MenuItem $width={19}>View</MenuItem>
          <MenuItem $width={21}>Insert</MenuItem>
          <MenuItem $width={22}>Charts</MenuItem>
          <MenuItem $width={20}>Tools</MenuItem>
          <MenuItem $width={27}>Window</MenuItem>
          <MenuItem $width={14}>Help</MenuItem>
          <ChildButtons>
            <svg width="5" height="6" viewBox="0 0 5 6"><path d="M1 4.5H4" stroke="currentColor" /></svg>
            <svg width="5" height="6" viewBox="0 0 5 6" fill="none"><path d="M1.5 2V1H4.5V4H4M0.5 2.5H3.5V5H0.5Z" stroke="currentColor" strokeWidth="0.8" /></svg>
            <svg width="5" height="6" viewBox="0 0 5 6"><path d="M1 1L4.5 5M4.5 1L1 5" stroke="currentColor" /></svg>
          </ChildButtons>
        </MenuBar>
        <MainTools />
        <LineTools />
        <ChartFrame>
          <PricePane />
          <Divider />
          <LaguerrePane />
          <Divider />
          <MacdPane />
          <Divider $height={1} />
          <TimeAxis>
            <TimeLabel>26 Aug 2008</TimeLabel>
            <TimeLabel>26 Aug 13:31</TimeLabel>
            <TimeLabel>26 Aug 13:40</TimeLabel>
            <TimeLabel $width={24}>26 Aug 13:4</TimeLabel>
            <CursorTime>2008.08.26 14:00</CursorTime>
            {times.map((time) => (
              <TimeLabel key={time}>26 Aug {time}</TimeLabel>
            ))}
          </TimeAxis>
          <Note $x={145} $y={41} $width={101} $height={66}>{"1 min chart\nentry long at\n1.45.85 at S3"}</Note>
          <Note $x={354} $y={193} $width={81} $height={35}>ema cross</Note>
        </ChartFrame>
        <Tabs>
          {tabs.map(([name, width, active], i) => (
            <Tab key={i} $width={width} $active={active}>{name}</Tab>
          ))}
          <TabArrows viewBox="0 0 14 9">
            <path d="M3 3V6L1 4.5ZM9 3V6L11 4.5Z" fill="#8b877e" />
          </TabArrows>
        </Tabs>
        <StatusBar>
          <StatusCell $width={272}>For Help, press F1</StatusCell>
          <StatusCell $width={53} $pad={1}>Default</StatusCell>
          <StatusCell $width={118} />
          <StatusCell $width={68} />
          <StatusCell $width={32} />
          <StatusCell $width={74} $pad={3}>
            <svg width="12" height="7" viewBox="0 0 12 7">
              <rect width="12" height="7" fill="#62a49a" />
              <path d="M2 1V6M4 1V6M6 1V6M8 3V6M10 4V6" stroke="#1c4a44" />
            </svg>
            1285/6 kb
          </StatusCell>
        </StatusBar>
        <TaskBar />
      </Window>
    </>
  );
}
